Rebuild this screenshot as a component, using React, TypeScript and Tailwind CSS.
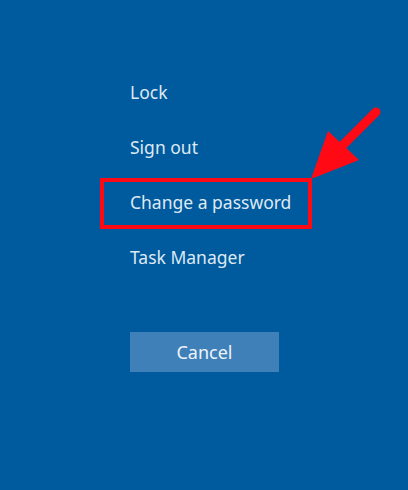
export default function App() {
  const items = ['Lock', 'Sign out', 'Change a password', 'Task Manager'];

  return (
    <div
      className="relative w-[408px] h-[490px] bg-[#005a9e] overflow-hidden"
      style={{ fontFamily: '"Noto Sans", "Open Sans", sans-serif' }}
    >
      <div className="flex flex-col pl-[130px] pt-[65px]">
        {items.map((item) => (
          <div key={item} className="relative h-[55px] flex items-center text-[17.5px] text-[#dfe9f3]">
            {item}
            {item === 'Change a password' && (
              <div className="absolute left-[-30px] top-[3px] w-[212px] h-[51px] border-[4px] border-[#ff0a14]" />
            )}
          </div>
        ))}

        <button className="mt-[47px] w-[149px] h-[40px] bg-[#3f80b9] text-[18px] text-[#eef4fa]">
          Cancel
        </button>
      </div>

      {/* red arrow */}
      <svg className="absolute left-0 top-0" width="408" height="490" viewBox="0 0 408 490">
        <line x1="376" y1="112" x2="340" y2="148" stroke="#ff0a14" strokeWidth="9" strokeLinecap="round" />
        <polygon points="311,179 328,131 359,160" fill="#ff0a14" />
      </svg>
    </div>
  );
}
